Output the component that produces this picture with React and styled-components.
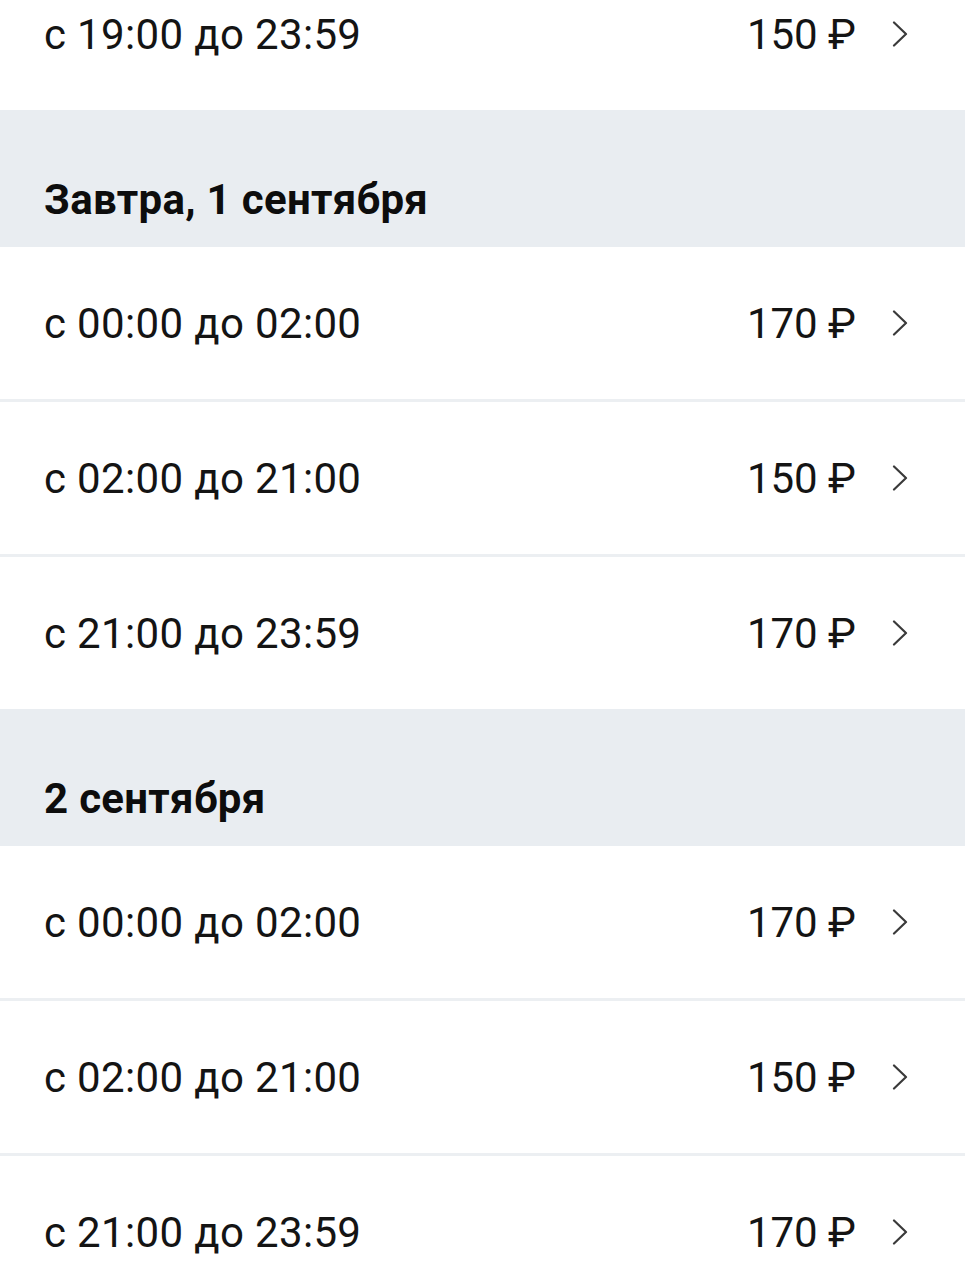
import styled, { createGlobalStyle } from "styled-components";

const Global = createGlobalStyle`
  body {
    margin: 0;
    background: #ffffff;
    font-family: Roboto, "Noto Sans", sans-serif;
    color: #111111;
  }
`;

const List = styled.div`
  margin-top: -42px;
  display: flex;
  flex-direction: column;
  overflow: hidden;
`;

const Header = styled.div`
  height: 137px;
  box-sizing: border-box;
  background: #e9edf1;
  padding: 64px 44px 0;
  font-size: 42px;
  font-weight: 700;
  letter-spacing: 0.3px;
  line-height: 52px;
  color: #0d0d0d;
`;

const Row = styled.div`
  height: 152px;
  display: flex;
  align-items: center;
  padding: 0 57px 0 44px;
  border-bottom: ${(p) => (p.$last ? "none" : "3px solid #eceff2")};
  font-size: 42px;
  letter-spacing: 0.35px;
  font-weight: 400;
  color: #141414;
`;

const Time = styled.div`
  flex: 1;
`;

const Price = styled.div`
  white-space: nowrap;
  letter-spacing: 0;
`;

const Arrow = styled.svg`
  width: 16px;
  height: 26px;
  margin-left: 36px;
  flex-shrink: 0;
`;

function Chevron() {
  return (
    <Arrow viewBox="0 0 16 26" fill="none">
      <path d="M2 1.5 L14 13 L2 24.5" stroke="#3a3a3a" strokeWidth="2.2" strokeLinecap="round" strokeLinejoin="round" />
    </Arrow>
  );
}

const sections = [
  { title: null, rows: [["с 19:00 до 23:59", "150 ₽"]] },
  {
    title: "Завтра, 1 сентября",
    rows: [
      ["с 00:00 до 02:00", "170 ₽"],
      ["с 02:00 до 21:00", "150 ₽"],
      ["с 21:00 до 23:59", "170 ₽"],
    ],
  },
  {
    title: "2 сентября",
    rows: [
      ["с 00:00 до 02:00", "170 ₽"],
      ["с 02:00 до 21:00", "150 ₽"],
      ["с 21:00 до 23:59", "170 ₽"],
    ],
  },
];

export default function App() {
  return (
    <>
      <Global />
      <List>
        {sections.map((s, i) => (
          <div key={i}>
            {s.title && <Header>{s.title}</Header>}
            {s.rows.map(([time, price], j) => (
              <Row key={j} $last={j === s.rows.length - 1}>
                <Time>{time}</Time>
                <Price>{price}</Price>
                <Chevron />
              </Row>
            ))}
          </div>
        ))}
      </List>
    </>
  );
}
